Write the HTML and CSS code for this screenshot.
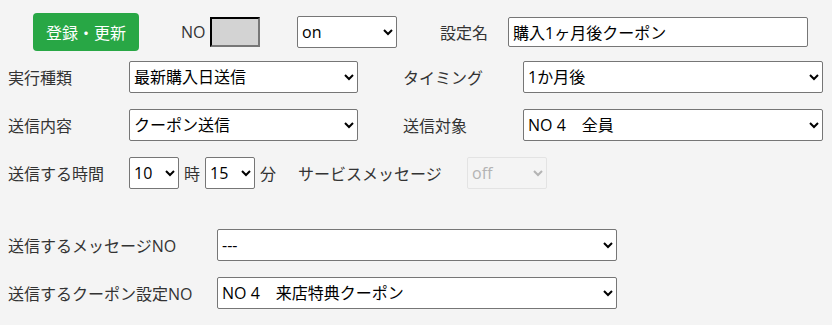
FILE: index.html
```html
<!DOCTYPE html>
<html lang="ja">
<head>
    <meta charset="UTF-8">
    <meta name="viewport" content="width=device-width, initial-scale=1.0">
    <title>配信設定</title>
    <link rel="stylesheet" href="styles.css">
</head>
<body>
    <form class="setting-form">
        <div class="row row-top">
            <button type="button" class="btn-save">登録・更新</button>
            <span class="no-label">NO</span>
            <input type="text" class="no-box" readonly>
            <select class="sel-onoff">
                <option>on</option>
                <option>off</option>
            </select>
            <span class="name-label">設定名</span>
            <input type="text" class="name-input" value="購入1ヶ月後クーポン">
        </div>

        <div class="row">
            <label class="label-main">実行種類</label>
            <select class="sel-main">
                <option>最新購入日送信</option>
            </select>
            <label class="label-sub">タイミング</label>
            <select class="sel-sub">
                <option>1か月後</option>
            </select>
        </div>

        <div class="row">
            <label class="label-main">送信内容</label>
            <select class="sel-main">
                <option>クーポン送信</option>
            </select>
            <label class="label-sub">送信対象</label>
            <select class="sel-sub">
                <option>NO 4　全員</option>
            </select>
        </div>

        <div class="row">
            <label class="label-main">送信する時間</label>
            <select class="sel-time">
                <option>10</option>
            </select>
            <span class="unit">時</span>
            <select class="sel-time">
                <option>15</option>
            </select>
            <span class="unit">分</span>
            <span class="service-label">サービスメッセージ</span>
            <select class="sel-service" disabled>
                <option>off</option>
            </select>
        </div>

        <div class="row row-spaced">
            <label class="label-wide">送信するメッセージNO</label>
            <select class="sel-wide">
                <option>---</option>
            </select>
        </div>

        <div class="row">
            <label class="label-wide">送信するクーポン設定NO</label>
            <select class="sel-wide">
                <option>NO 4　来店特典クーポン</option>
            </select>
        </div>
    </form>
</body>
</html>
```

FILE: styles.css
```css
* {
    box-sizing: border-box;
}

body {
    margin: 0;
    padding: 13px 8px 0;
    background-color: #f4f4f4;
    color: #333;
    font-family: "Open Sans", "Noto Sans CJK JP", sans-serif;
    font-size: 16px;
}

.row {
    display: flex;
    align-items: center;
    height: 32px;
    margin-bottom: 16px;
}

.row-top {
    height: 38px;
    margin-bottom: 10px;
}

.row-spaced {
    margin-top: 40px;
}

select,
input {
    font-family: "Open Sans", "Noto Sans CJK JP", sans-serif;
    font-size: 16px;
    color: #000;
    height: 32px;
    background-color: #fff;
    border: 1px solid #767676;
    border-radius: 2px;
    margin: 0;
}

.btn-save {
    margin-left: 25px;
    width: 106px;
    height: 38px;
    background-color: #28a745;
    color: #fff;
    border: none;
    border-radius: 4px;
    font-family: "Noto Sans CJK JP", sans-serif;
    font-size: 16px;
    padding: 0;
}

.no-label {
    margin-left: 42px;
    width: 29px;
}

.no-box {
    width: 50px;
    height: 30px;
    background-color: #d3d3d3;
    border: 2px inset #2b2b2b;
    border-right-color: #777;
    border-bottom-color: #777;
    border-radius: 0;
}

.sel-onoff {
    margin-left: 37px;
    width: 100px;
}

.name-label {
    margin-left: 43px;
    width: 68px;
}

.name-input {
    width: 300px;
    height: 30px;
    padding: 0 4px;
}

.label-main {
    width: 121px;
}

.sel-main {
    width: 229px;
}

.label-sub {
    margin-left: 45px;
    width: 120px;
}

.sel-sub {
    width: 300px;
}

.sel-time {
    width: 50px;
}

.unit {
    width: 26px;
    text-align: center;
}

.service-label {
    margin-left: 17px;
    width: 169px;
}

.sel-service {
    width: 80px;
    color: #999;
    background-color: #f4f4f4;
    border-color: #ddd;
}

.label-wide {
    width: 209px;
}

.sel-wide {
    width: 400px;
}
```
